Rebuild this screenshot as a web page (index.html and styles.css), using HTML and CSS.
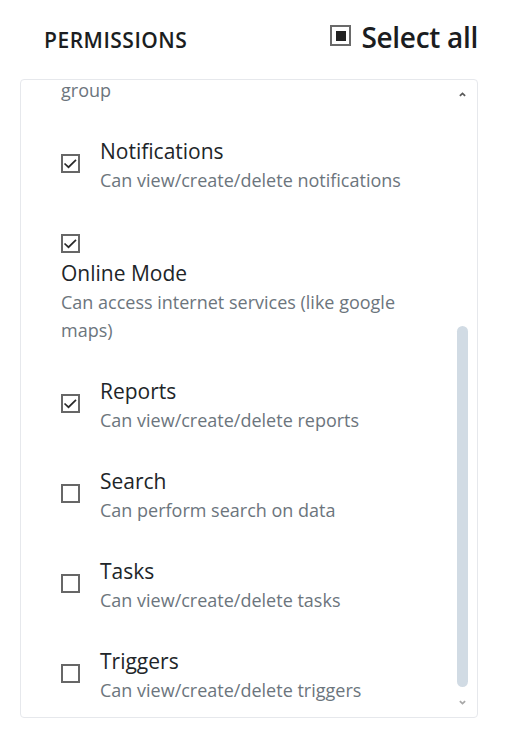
FILE: index.html
```html
<!DOCTYPE html>
<html lang="en">
<head>
<meta charset="utf-8">
<title>Permissions</title>
<link rel="stylesheet" href="styles.css">
</head>
<body>
<div class="page">
  <div class="header">
    <h2 class="heading">PERMISSIONS</h2>
    <label class="select-all">
      <span class="cb-indeterminate"></span>
      <span class="select-all-text">Select all</span>
    </label>
  </div>
  <div class="box">
    <div class="viewport">
      <ul class="list">
        <li class="item item--tail">
          <div class="desc">group</div>
        </li>
        <li class="item">
          <span class="cb cb--checked"><svg viewBox="0 0 15 15" class="check"><polyline points="1.5,7.5 5.5,11.2 13,3.8"/></svg></span>
          <div class="label">
            <div class="title">Notifications</div>
            <div class="desc">Can view/create/delete notifications</div>
          </div>
        </li>
        <li class="item item--stacked">
          <span class="cb cb--checked"><svg viewBox="0 0 15 15" class="check"><polyline points="1.5,7.5 5.5,11.2 13,3.8"/></svg></span>
          <div class="label">
            <div class="title">Online Mode</div>
            <div class="desc">Can access internet services (like google maps)</div>
          </div>
        </li>
        <li class="item">
          <span class="cb cb--checked"><svg viewBox="0 0 15 15" class="check"><polyline points="1.5,7.5 5.5,11.2 13,3.8"/></svg></span>
          <div class="label">
            <div class="title">Reports</div>
            <div class="desc">Can view/create/delete reports</div>
          </div>
        </li>
        <li class="item">
          <span class="cb"></span>
          <div class="label">
            <div class="title">Search</div>
            <div class="desc">Can perform search on data</div>
          </div>
        </li>
        <li class="item">
          <span class="cb"></span>
          <div class="label">
            <div class="title">Tasks</div>
            <div class="desc">Can view/create/delete tasks</div>
          </div>
        </li>
        <li class="item">
          <span class="cb"></span>
          <div class="label">
            <div class="title">Triggers</div>
            <div class="desc">Can view/create/delete triggers</div>
          </div>
        </li>
      </ul>
    </div>
    <div class="scrollbar">
      <div class="sb-btn sb-btn--up">
        <svg viewBox="0 0 8 5" class="sb-arrow sb-arrow--up"><polyline points="1,4.2 4,1.2 7,4.2"/></svg>
      </div>
      <div class="sb-track"><div class="sb-thumb"></div></div>
      <div class="sb-btn sb-btn--down">
        <svg viewBox="0 0 8 5" class="sb-arrow sb-arrow--down"><polyline points="1,0.8 4,3.8 7,0.8"/></svg>
      </div>
    </div>
  </div>
</div>
</body>
</html>
```

FILE: styles.css
```css
html, body {
  margin: 0;
  padding: 0;
  background: #ffffff;
}

body {
  font-family: "Open Sans", "Noto Sans", sans-serif;
  color: #212529;
}

.page {
  padding: 0 34px 0 20px;
}

.header {
  display: flex;
  justify-content: space-between;
  align-items: center;
  height: 79px;
  padding-left: 24px;
  box-sizing: border-box;
}

.heading {
  margin: 0;
  font-size: 21px;
  font-weight: 600;
  letter-spacing: 0.5px;
  color: #1b1d21;
  line-height: normal;
}

.select-all {
  display: flex;
  align-items: center;
  gap: 10px;
  margin-bottom: 5px;
  font-size: 28px;
  font-weight: 600;
  letter-spacing: -0.3px;
  color: #1b1d21;
}

.cb-indeterminate {
  width: 21px;
  height: 21px;
  border: 2px solid #6a6a6a;
  box-sizing: border-box;
  display: flex;
  align-items: center;
  justify-content: center;
  margin-bottom: 3px;
}

.cb-indeterminate::after {
  content: "";
  width: 10px;
  height: 10px;
  background: #222222;
}

.box {
  display: flex;
  height: 639px;
  border: 1px solid #e6e8ec;
  border-radius: 4px;
  box-sizing: border-box;
  overflow: hidden;
}

.viewport {
  flex: 1;
  overflow: hidden;
  padding: 0 27px 0 40px;
}

.list {
  list-style: none;
  margin: 0;
  padding: 0;
}

.item {
  display: flex;
  align-items: center;
  gap: 20px;
  padding: 16px 0;
}

.item--tail {
  padding: 0 0 20px 0;
}

.item--tail .desc {
  line-height: 20px;
}

.item--stacked {
  flex-direction: column;
  align-items: flex-start;
  gap: 0;
}

.cb {
  flex: none;
  width: 19px;
  height: 19px;
  border: 2px solid #676767;
  box-sizing: border-box;
  margin-bottom: 4px;
  display: block;
}

.item--stacked .cb {
  margin: 8px 0 5px 0;
}

.check {
  display: block;
  width: 15px;
  height: 15px;
  fill: none;
  stroke: #2a2a2a;
  stroke-width: 1.7;
}

.title {
  font-size: 21px;
  line-height: 30px;
  color: #212529;
}

.desc {
  font-size: 18px;
  line-height: 28px;
  color: #6c757d;
}

.scrollbar {
  flex: none;
  width: 22px;
  display: flex;
  flex-direction: column;
  padding: 0 9px 7px 2px;
  box-sizing: border-box;
}

.sb-btn {
  display: flex;
  align-items: center;
  justify-content: center;
}

.sb-btn--up {
  height: 28px;
}

.sb-btn--down {
  height: 16px;
}

.sb-arrow {
  width: 7px;
  height: 5px;
  fill: none;
  stroke-width: 2;
}

.sb-arrow--up {
  stroke: #5a5a5a;
}

.sb-arrow--down {
  stroke: #a8a8a8;
}

.sb-track {
  flex: 1;
}

.sb-thumb {
  margin-top: 218px;
  height: 361px;
  border-radius: 6px;
  background: #d1dbe4;
}
```
